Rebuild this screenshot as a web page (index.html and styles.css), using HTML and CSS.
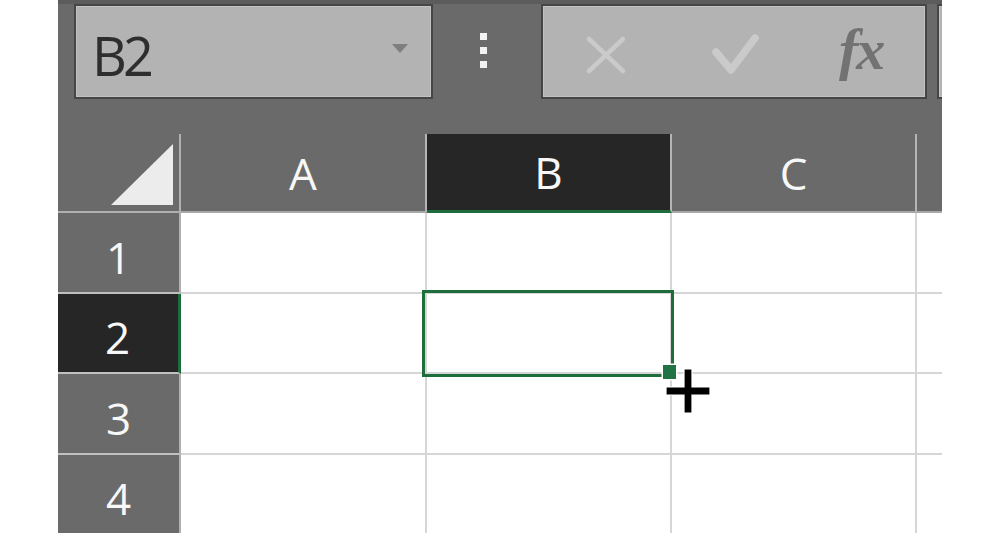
FILE: index.html
```html
<!DOCTYPE html>
<html>
<head>
<meta charset="utf-8">
<link rel="stylesheet" href="styles.css">
</head>
<body>
<div class="app">
  <div class="toolbar">
    <div class="namebox">
      <span class="ref">B2</span>
      <span class="caret"></span>
    </div>
    <div class="dots"><i></i><i></i><i></i></div>
    <div class="fbox">
      <svg class="ico-x" width="42" height="40" viewBox="0 0 42 40"><path d="M4 4 L38 36 M38 4 L4 36" stroke="#cacaca" stroke-width="4.5" stroke-linecap="round" fill="none"/></svg>
      <svg class="ico-ok" width="48" height="42" viewBox="0 0 48 42"><path d="M5 19 L20 37 L44 5" stroke="#cacaca" stroke-width="7.5" stroke-linecap="round" stroke-linejoin="round" fill="none"/></svg>
      <span class="fx">fx</span>
    </div>
    <div class="fbox2"></div>
  </div>
  <div class="sheet">
    <div class="corner"><svg width="62" height="61" viewBox="0 0 62 61"><polygon points="0,61 62,0 62,61" fill="#ececec"/></svg></div>
    <div class="ch">A</div>
    <div class="ch sel-col">B</div>
    <div class="ch">C</div>
    <div class="ch rest"></div>

    <div class="rh">1</div>
    <div class="cell"></div><div class="cell"></div><div class="cell"></div><div class="cell rest"></div>

    <div class="rh sel-row">2</div>
    <div class="cell"></div><div class="cell"></div><div class="cell"></div><div class="cell rest"></div>

    <div class="rh">3</div>
    <div class="cell"></div><div class="cell"></div><div class="cell"></div><div class="cell rest"></div>

    <div class="rh">4</div>
    <div class="cell"></div><div class="cell"></div><div class="cell"></div><div class="cell rest"></div>
  </div>
  <div class="selection"></div>
  <div class="handle"></div>
  <svg class="cursor" width="46" height="46" viewBox="0 0 46 46"><path d="M19 1 H27 V19 H45 V27 H27 V45 H19 V27 H1 V19 H19 Z" fill="#000" stroke="#fff" stroke-width="1.2"/></svg>
</div>
</body>
</html>
```

FILE: styles.css
```css
html, body {
  margin: 0;
  padding: 0;
  background: #ffffff;
}
body {
  font-family: "Open Sans", "Noto Sans", sans-serif;
}
.app {
  position: relative;
  margin-left: 58px;
  width: 884px;
  height: 533px;
  overflow: hidden;
  background: #6a6a6a;
}
.toolbar {
  box-sizing: border-box;
  height: 134px;
  border-top: 4px solid #5c5c5c;
  display: flex;
  align-items: flex-start;
  padding-left: 16px;
}
.namebox {
  box-sizing: border-box;
  flex: 0 0 359px;
  height: 95px;
  border: 2px solid #464646;
  background: #b3b3b3;
  box-shadow: inset 0 0 0 1px #c2c2c2;
  display: flex;
  align-items: flex-start;
  padding: 22px 23px 0 16px;
}
.ref {
  font-size: 54px;
  line-height: 54px;
  color: #2e2e2e;
  letter-spacing: -4px;
}
.caret {
  margin-left: auto;
  margin-top: 16px;
  width: 0;
  height: 0;
  border-left: 8px solid transparent;
  border-right: 8px solid transparent;
  border-top: 9px solid #7e7e7e;
}
.dots {
  margin-left: 47px;
  margin-top: 29px;
  display: flex;
  flex-direction: column;
  gap: 7px;
}
.dots i {
  display: block;
  width: 7px;
  height: 7px;
  background: #f2f2f2;
}
.fbox {
  box-sizing: border-box;
  flex: 0 0 386px;
  margin-left: 54px;
  height: 95px;
  border: 2px solid #464646;
  background: #b3b3b3;
  box-shadow: inset 0 0 0 1px #c2c2c2;
  display: flex;
  align-items: flex-start;
  padding-left: 42px;
}
.ico-x {
  margin-top: 29px;
}
.ico-ok {
  margin-left: 84px;
  margin-top: 27px;
}
.fx {
  margin-left: 80px;
  margin-top: 12px;
  font-family: "Liberation Serif", serif;
  font-style: italic;
  font-weight: bold;
  font-size: 58px;
  line-height: 64px;
  color: #727272;
  letter-spacing: -2px;
}
.fbox2 {
  box-sizing: border-box;
  flex: 0 0 200px;
  margin-left: 10px;
  height: 95px;
  border: 2px solid #464646;
  background: #b3b3b3;
  box-shadow: inset 0 0 0 1px #c2c2c2;
}
.sheet {
  display: grid;
  grid-template-columns: 123px 246px 245px 245px 1fr;
  grid-template-rows: 79px 81px 80px 81px 80px;
}
.sheet > div {
  box-sizing: border-box;
}
.corner {
  background: #6a6a6a;
  border-right: 2px solid #b0b0b0;
  border-bottom: 2px solid #b0b0b0;
  display: flex;
  align-items: flex-end;
  justify-content: flex-end;
  padding: 0 6px 6px 0;
}
.corner svg {
  display: block;
}
.ch {
  background: #6a6a6a;
  border-right: 2px solid #b5b5b5;
  border-bottom: 2px solid #a8a8a8;
  color: #f7f7f7;
  font-size: 44px;
  line-height: 44px;
  display: flex;
  align-items: center;
  justify-content: center;
}
.ch.rest {
  border-right: none;
}
.ch.sel-col {
  background: #262626;
  border-bottom: 3px solid #1e6e3b;
}
.rh {
  background: #6a6a6a;
  border-right: 2px solid #b0b0b0;
  border-bottom: 2px solid #c0c0c0;
  color: #f7f7f7;
  font-size: 44px;
  line-height: 44px;
  display: flex;
  align-items: center;
  justify-content: center;
  padding-top: 8px;
}
.rh.sel-row {
  background: #262626;
  border-right: 3px solid #1e6e3b;
  padding-right: 1px;
}
.cell {
  background: #ffffff;
  border-right: 2px solid #d6d6d6;
  border-bottom: 2px solid #d6d6d6;
}
.cell.rest {
  border-right: none;
}
.selection {
  position: absolute;
  left: 364px;
  top: 290px;
  width: 252px;
  height: 87px;
  box-sizing: border-box;
  border: 3px solid #1e6e3b;
}
.handle {
  position: absolute;
  left: 605px;
  top: 365px;
  width: 13px;
  height: 14px;
  background: #217346;
  box-shadow: 0 0 0 1.5px #ffffff;
}
.cursor {
  position: absolute;
  left: 607px;
  top: 368px;
}
```
